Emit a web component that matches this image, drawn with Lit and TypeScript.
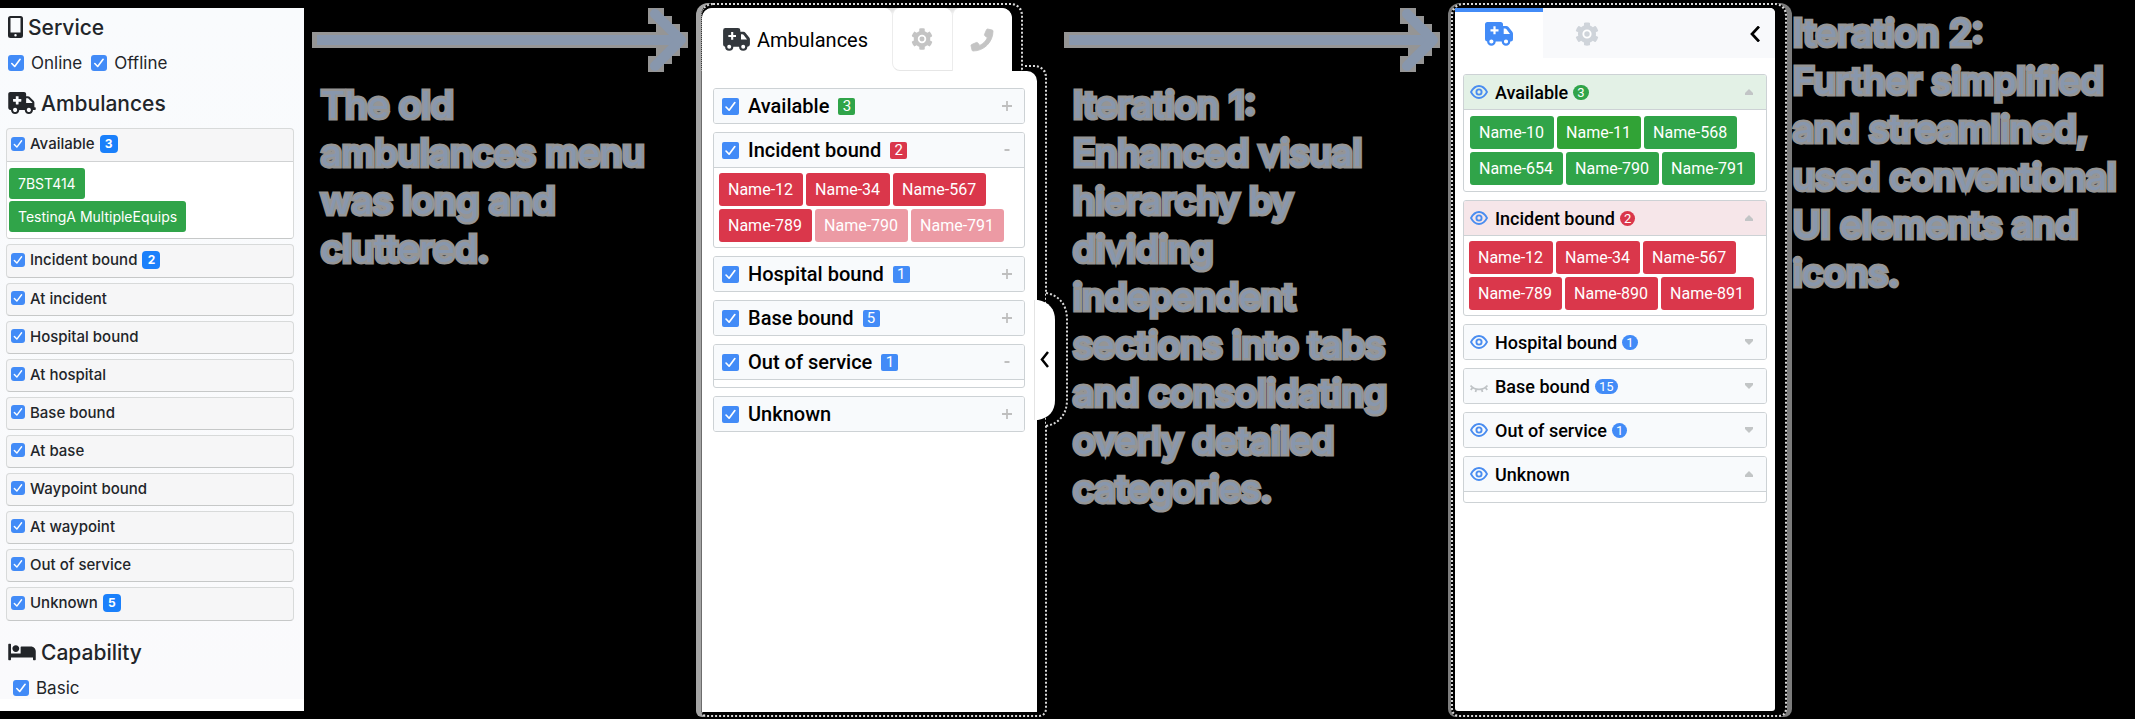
import { LitElement, html, svg, css, nothing } from "lit";
import { customElement, property } from "lit/decorators.js";

const ambulanceSolid = svg`<path d="M624 352h-16V243.9c0-12.7-5.1-24.9-14.1-33.9L494 110.1c-9-9-21.2-14.1-33.9-14.1H416V48c0-26.5-21.5-48-48-48H48C21.5 0 0 21.5 0 48v320c0 26.5 21.5 48 48 48h16c0 53 43 96 96 96s96-43 96-96h128c0 53 43 96 96 96s96-43 96-96h48c8.8 0 16-7.2 16-16v-32c0-8.8-7.2-16-16-16zM160 464c-26.5 0-48-21.5-48-48s21.5-48 48-48 48 21.5 48 48-21.5 48-48 48zm144-248c0 4.4-3.6 8-8 8h-56v56c0 4.4-3.6 8-8 8h-48c-4.4 0-8-3.6-8-8v-56h-56c-4.4 0-8-3.6-8-8v-48c0-4.4 3.6-8 8-8h56v-56c0-4.4 3.6-8 8-8h48c4.4 0 8 3.6 8 8v56h56c4.4 0 8 3.6 8 8v48zm176 248c-26.5 0-48-21.5-48-48s21.5-48 48-48 48 21.5 48 48-21.5 48-48 48zm80-208H416V144h44.1l99.9 99.9V256z"/>`;
const ambulanceRound = svg`<path fill-rule="evenodd" d="M2.5 0H15.500a2.500 2.500 0 0 1 2.500 2.500V4h3.200a3 3 0 0 1 2.300 1.100l3.800 4.700a3 3 0 0 1 .7 1.900V17a2.500 2.500 0 0 1-2.500 2.500h-.2a4.300 4.300 0 0 1-8.600 0h-6a4.300 4.300 0 0 1-8.600 0A2.200 2.200 0 0 1 0 17.300V2.500A2.500 2.500 0 0 1 2.500 0zM8.400 4.300v2.900H5.500v2.200h2.900v2.900h2.200V9.400h2.900V7.200h-2.900V4.300zM18.700 6.500V12H25l-3.700-4.900a1.500 1.500 0 0 0-1.200-.6zM6.400 17.400a2.100 2.100 0 1 0 0 4.200 2.100 2.100 0 0 0 0-4.200zM21 17.400a2.100 2.100 0 1 0 0 4.200 2.100 2.100 0 0 0 0-4.200z"/>`;
const gear = svg`<path d="M487.4 315.7l-42.6-24.6c4.3-23.2 4.3-47 0-70.2l42.6-24.6c4.9-2.8 7.1-8.6 5.5-14-11.1-35.6-30-67.8-54.7-94.6-3.8-4.1-10-5.1-14.8-2.3L380.8 110c-17.9-15.4-38.5-27.3-60.8-35.1V25.800c0-5.600-3.900-10.500-9.400-11.700-36.700-8.200-74.300-7.800-109.200 0-5.500 1.200-9.400 6.100-9.400 11.700V75c-22.200 7.900-42.800 19.800-60.800 35.100L88.700 85.500c-4.900-2.800-11-1.900-14.800 2.300-24.700 26.700-43.600 58.900-54.700 94.600-1.700 5.400.6 11.200 5.500 14L67.300 221c-4.300 23.200-4.300 47 0 70.200l-42.600 24.600c-4.900 2.800-7.100 8.600-5.500 14 11.100 35.600 30 67.800 54.700 94.600 3.800 4.100 10 5.100 14.800 2.300l42.600-24.600c17.900 15.400 38.500 27.300 60.800 35.100v49.200c0 5.600 3.900 10.500 9.400 11.700 36.700 8.200 74.300 7.800 109.200 0 5.500-1.200 9.400-6.100 9.400-11.700v-49.200c22.200-7.900 42.800-19.800 60.800-35.100l42.600 24.600c4.900 2.800 11 1.900 14.800-2.300 24.700-26.700 43.600-58.900 54.700-94.600 1.500-5.500-.7-11.300-5.600-14.100z"/><circle cx="256" cy="256" r="78" fill="none" stroke="#fff" stroke-width="40"/>`;
const phone = svg`<path d="M493.4 24.6l-104-24c-11.3-2.6-22.9 3.3-27.5 13.900l-48 112c-4.200 9.800-1.400 21.300 6.900 28l60.600 49.600c-36 76.700-98.900 140.500-177.200 177.200l-49.600-60.600c-6.800-8.300-18.200-11.100-28-6.900l-112 48C3.900 366.500-2 378.100.6 389.400l24 104C27.100 504.200 36.700 512 48 512c256.100 0 464-207.500 464-464 0-11.200-7.700-20.900-18.600-23.400z"/>`;
const bed = svg`<path d="M176 256c44.110 0 80-35.890 80-80s-35.890-80-80-80-80 35.890-80 80 35.890 80 80 80zm352-128H304c-8.840 0-16 7.160-16 16v144H64V80c0-8.840-7.160-16-16-16H16C7.160 64 0 71.160 0 80v352c0 8.840 7.160 16 16 16h32c8.840 0 16-7.160 16-16v-48h512v48c0 8.840 7.160 16 16 16h32c8.840 0 16-7.160 16-16V240c0-61.860-50.140-112-112-112z"/>`;

const eyeOpen = html`<svg class="eye" viewBox="0 0 18 14" aria-hidden="true"><g fill="none" stroke="#4a8df0"><path stroke-width="1.800" d="M1 7C3 3.200 5.700 1 9 1s6 2.200 8 6c-2 3.800-4.700 6-8 6S3 10.800 1 7z"/><circle cx="9" cy="7" r="2.600" stroke-width="1.900"/></g></svg>`;
const eyeClosed = html`<svg class="eye" viewBox="0 0 18 14" aria-hidden="true"><path fill="none" stroke="#bfc3c6" stroke-width="1.800" d="M.5 6.500C3 9.300 6 10.300 9 10.300s6-1 8.500-3.800M2.800 8.300.8 11M6.400 9.900l-.9 3M11.600 9.900l.9 3M15.200 8.300l2 2.700"/></svg>`;

const boxStyles = css`
  * { box-sizing: border-box; }
  button { font: inherit; border: 0; background: none; padding: 0; margin: 0; cursor: pointer; }
  h2, h3, p { margin: 0; }
  svg { display: block; flex: none; }
  label { display: flex; align-items: center; }
  input[type="checkbox"] {
    appearance: none;
    flex: none;
    margin: 0;
    width: 16px;
    height: 16px;
    border-radius: 3px;
    background: #428bf7 url("data:image/svg+xml,%3Csvg xmlns='http://www.w3.org/2000/svg' viewBox='0 0 16 16'%3E%3Cpath d='M3.800 8.500l2.900 3 5.400-7.200' fill='none' stroke='white' stroke-width='1.600' stroke-linecap='round' stroke-linejoin='round'/%3E%3C/svg%3E") center / 100% no-repeat;
  }
  input[type="checkbox"]:not(:checked) { background: #fff; border: 1px solid #bbb; }
`;

/* ---------- first menu ---------- */

@customElement("legacy-menu")
export class LegacyMenu extends LitElement {
  static styles = [boxStyles, css`
    :host { display: block; padding: 8px 0; font-family: Inter, sans-serif; color: #222529; }
    .panel { height: 100%; background: #fff; padding-bottom: 12px; }
    .content { height: 100%; overflow: hidden; background: linear-gradient(#f9fbfd, #fafafc); padding: 5px 10px 0 6px; }
    h2 { display: flex; align-items: center; gap: 5px; padding-left: 2px; height: 28px; font-size: 21px; font-weight: 500; }
    .checks { display: flex; gap: 9px; padding-left: 2px; height: 24px; margin: 10px 0 14px; font-size: 17px; }
    .checks label { gap: 7px; }
    .groups { display: flex; flex-direction: column; gap: 5px; margin: 11px 0 17px; }
    .group { border: 1px solid #d8dada; border-bottom-color: #c6c8c8; border-radius: 4px; background: #f6f6f7; overflow: hidden; }
    .group label { gap: 5px; height: 31px; padding: 0 0 3px 4px; font-size: 15px; font-weight: 500; }
    .group label.counted { height: 32px; }
    .group input { width: 14px; height: 14px; }
    .badge { display: grid; place-items: center; width: 18px; height: 18px; border-radius: 4px; background: #1a80fb; color: #fff; font-size: 12px; font-weight: 700; }
    .units { display: flex; flex-direction: column; align-items: flex-start; gap: 2px; padding: 6px 2px; border-top: 1px solid #d0d2d3; background: #fff; }
    .unit { height: 31px; padding: 0 9px; border-radius: 3px; background: #30a449; color: #fff; font-size: 14px; }
    .indent { padding-left: 7px; height: 20px; margin: 12px 0 0; }
  `];

  private groups: [string, string?, string[]?][] = [
    ["Available", "3", ["7BST414", "TestingA MultipleEquips"]],
    ["Incident bound", "2"], ["At incident"], ["Hospital bound"], ["At hospital"], ["Base bound"],
    ["At base"], ["Waypoint bound"], ["At waypoint"], ["Out of service"], ["Unknown", "5"],
  ];

  render() {
    return html`<div class="panel"><div class="content">
      <h2><svg width="15" height="22" viewBox="0 0 15 22" aria-hidden="true"><path fill="#222529" fill-rule="evenodd" d="M2.500 0h10A2.500 2.500 0 0 1 15 2.500v17a2.500 2.500 0 0 1-2.500 2.500h-10A2.500 2.500 0 0 1 0 19.500v-17A2.500 2.500 0 0 1 2.500 0zM2.500 2v14.500h10V2zM7.500 18a1.200 1.200 0 1 0 0 2.500 1.200 1.200 0 0 0 0-2.500z"/></svg>Service</h2>
      <div class="checks">
        <label><input type="checkbox" checked>Online</label>
        <label><input type="checkbox" checked>Offline</label>
      </div>
      <h2><svg width="28" height="22" viewBox="0 0 640 512" fill="#222529" aria-hidden="true">${ambulanceSolid}</svg>Ambulances</h2>
      <div class="groups">
        ${this.groups.map(([name, count, units]) => html`<section class="group">
          <label class=${count ? "counted" : ""}><input type="checkbox" checked>${name}${count ? html`<span class="badge">${count}</span>` : nothing}</label>
          ${units ? html`<div class="units">${units.map(u => html`<button class="unit">${u}</button>`)}</div>` : nothing}
        </section>`)}
      </div>
      <h2><svg width="28" height="22" viewBox="0 0 640 512" fill="#222529" aria-hidden="true">${bed}</svg>Capability</h2>
      <div class="checks indent"><label><input type="checkbox" checked>Basic</label></div>
    </div></div>`;
  }
}

/* ---------- captions ---------- */

@customElement("step-note")
export class StepNote extends LitElement {
  @property({ type: Array }) lines: string[] = [];
  @property({ type: Boolean }) arrow = false;

  static styles = css`
    :host { display: block; }
    .arrow { display: block; width: 100%; height: 81px; }
    p { margin: 0; padding-left: 9px; font: 500 37px/48px Inter, sans-serif; color: #8897ad; white-space: nowrap;
      -webkit-text-stroke: 5px #959595; paint-order: stroke fill; stroke-linejoin: miter; }
  `;

  render() {
    return html`
      ${this.arrow ? html`<svg class="arrow" aria-hidden="true">
        <rect x="0" y="32" width="100%" height="16" fill="#959595"/>
        <svg x="100%" overflow="visible">
          <path fill="#959595" d="M-40 8h16v8h8v8h8v8h8v16h-8v8h-8v8h-8v8h-16v-16h8v-8h8v-16h-8v-8h-8z"/>
        </svg>
        <rect x="5" y="35" width="97%" height="10" fill="#8897ad"/>
        <svg x="100%" overflow="visible">
          <path fill="none" stroke="#8897ad" stroke-width="10" stroke-linecap="round" stroke-linejoin="round" d="M-33 14-7 40-33 66"/>
        </svg>
      </svg>` : nothing}
      <p>${this.lines.map((l, i) => html`${i ? html`<br>` : nothing}${l}`)}</p>`;
  }
}

/* ---------- shared card list for the newer menus ---------- */

const cardStyles = css`
  .cards { display: flex; flex-direction: column; gap: 8px; }
  .card { border: 1px solid #cdd2d5; border-radius: 3px; background: #fff; overflow: hidden; }
  .head { display: flex; align-items: center; height: 34px; background: #f8fafc; font-weight: 500; color: #000; }
  .toggle { margin-left: auto; color: #bfbfbf; }
  .units { display: flex; flex-wrap: wrap; gap: 3px; border-top: 1px solid #cdd2d5; padding: 5px; min-height: 8px; }
  .units.empty { padding: 0; }
  .unit { height: 33px; padding: 0 10px 0 9px; border-radius: 3px; color: #fff; font-size: 16px; background: #da374b; }
  .unit.faded { background: #ec9aa4; }
  .unit.green { background: #30a449; }
  .unit.lime { background: #31a336; }
  .badge { color: #fff; font-weight: 400; background: #428bf7; text-align: center; }
  .badge.green { background: #30a449; }
  .badge.red { background: #da374b; }
`;

interface Card {
  name: string;
  count?: string;
  tone?: string;
  tint?: string;
  hidden?: boolean;
  units?: [string, string][];
}

@customElement("tabbed-menu")
export class TabbedMenu extends LitElement {
  static styles = [boxStyles, cardStyles, css`
    :host { display: flex; flex-direction: column; position: relative; padding: 3px 17px 2px 5px; font-family: Roboto, sans-serif; }
    .rim { border: 2px dotted #d8d8d8; background: #000; box-shadow: -5px 0 0 #a4a4a4; }
    .tabs-rim { position: relative; z-index: 1; width: 93%; border-bottom: 0; border-left-width: 1px; border-radius: 12px 12px 0 0; padding: 3px 9px 0 0; margin-bottom: -6px; }
    .body-rim { flex: 1; border-left-width: 1px; border-radius: 0 12px 8px 6px; padding: 4px 8px 3px 0; }
    .tabs { display: flex; height: 63px; background: linear-gradient(#ddd, #fff 10px); border-radius: 10px 10px 0 0; overflow: hidden; }
    .tab { display: grid; place-items: center; width: 60px; background: #fff; border-radius: 8px 8px 0 0; border-left: 1px solid #ececec; }
    .tab.wide { flex: 1; display: flex; align-items: center; justify-content: flex-start; gap: 7px; padding-left: 21px; font-size: 20px; color: #000; border: 0; }
    .tab.first { border-bottom: 1px solid #e6e6e6; border-radius: 8px 8px 0 8px; }
    .body { height: 100%; background: #fff; border-radius: 0 10px 0 0; padding: 17px 12px 0 11px; }
    .head { padding: 0 10px 0 8px; font-size: 20px; }
    label { gap: 9px; }
    .head input { width: 17px; height: 17px; border-radius: 2px; }
    .badge { width: 17px; height: 17px; border-radius: 2px; font-size: 15px; line-height: 17px; }
    .toggle { width: 14px; height: 20px; display: grid; place-items: center; }
    .handle { position: absolute; z-index: 2; top: 292px; right: -4px; width: 34px; height: 135px; }
    .handle svg { width: 34px; height: 135px; }
  `];

  private cards: Card[] = [
    { name: "Available", count: "3", tone: "green" },
    { name: "Incident bound", count: "2", tone: "red", units: [["Name-12", ""], ["Name-34", ""], ["Name-567", ""], ["Name-789", ""], ["Name-790", "faded"], ["Name-791", "faded"]] },
    { name: "Hospital bound", count: "1" },
    { name: "Base bound", count: "5" },
    { name: "Out of service", count: "1", units: [] },
    { name: "Unknown" },
  ];

  render() {
    return html`
      <div class="rim tabs-rim"><div class="tabs">
        <button class="tab wide"><svg width="27" height="23" viewBox="0 0 28 24" fill="#33383d" aria-hidden="true">${ambulanceRound}</svg>Ambulances</button>
        <button class="tab first" aria-label="Settings"><svg width="22" height="22" viewBox="0 0 512 512" fill="#c4c4c4" aria-hidden="true">${gear}</svg></button>
        <button class="tab" aria-label="Calls"><svg width="22" height="22" viewBox="0 0 512 512" fill="#c4c4c4" stroke="#c4c4c4" stroke-width="20" stroke-linejoin="round" overflow="visible" aria-hidden="true">${phone}</svg></button>
      </div></div>
      <div class="rim body-rim"><div class="body"><div class="cards">
        ${this.cards.map(c => html`<section class="card">
          <div class="head">
            <label><input type="checkbox" checked>${c.name}${c.count ? html`<span class="badge ${c.tone ?? ""}">${c.count}</span>` : nothing}</label>
            <button class="toggle" aria-label=${c.units ? "Collapse" : "Expand"}><svg width="10" height="10" viewBox="0 0 10 10" stroke="currentColor" stroke-width="1.800"><path d=${c.units ? "M2.500 5h5" : "M0 5h10M5 0v10"}/></svg></button>
          </div>
          ${c.units ? html`<div class="units ${c.units.length ? "" : "empty"}">${c.units.map(([n, t]) => html`<button class="unit ${t}">${n}</button>`)}</div>` : nothing}
        </section>`)}
      </div></div></div>
      <button class="handle" aria-label="Collapse menu"><svg viewBox="0 0 34 135" aria-hidden="true">
        <path fill="#000" stroke="#d8d8d8" stroke-width="2" stroke-dasharray="2 2" d="M12 1C25 3 33 13 33 27v81c0 14-8 24-21 26"/>
        <path fill="#fff" d="M1 8h3c11 2 17 9 17 20v80c0 11-6 18-17 20H1z"/>
        <path fill="none" stroke="#e4e4e4" d="M.5 8v120"/>
        <path fill="none" stroke="#000" stroke-width="2.500" d="M14 60 8 67.500 14 75"/>
      </svg></button>`;
  }
}

@customElement("compact-menu")
export class CompactMenu extends LitElement {
  static styles = [boxStyles, cardStyles, css`
    :host { display: block; padding: 3px 5px 2px 3px; font-family: Roboto, sans-serif; }
    .rim { height: 100%; border: 2px dotted #d8d8d8; border-radius: 12px 12px 8px 8px; background: #000; box-shadow: -3px 0 0 #7c7c7c, 5px 0 0 #7c7c7c; padding: 3px 10px 4px 2px; }
    .body { height: 100%; background: #fff; border-radius: 0 5px 3px 3px; overflow: hidden; }
    .tabs { display: flex; align-items: stretch; height: 50px; background: #f8f9fb; }
    .tab { display: grid; place-items: center; width: 88px; padding-top: 2px; }
    .tab.active { background: #fff; border-top: 4px solid #428bf7; padding: 0 0 2px; }
    .close { margin-left: auto; padding: 2px 15px 0 0; }
    .cards { padding: 16px 8px 0; }
    .card:first-child .units { padding: 6px; }
    .card:last-child .units { min-height: 11px; }
    .head { padding: 0 12px 0 6px; font-size: 18px; }
    .head h3 { font: inherit; margin-left: 7px; }
    .head.mint { background: #e3f1e6; }
    .head.rose { background: #f6e6e9; }
    .eye { width: 18px; height: 14px; }
    .badge { margin-left: 5px; min-width: 15px; height: 15px; padding: 0 4px; border-radius: 8px; font-size: 13px; line-height: 15px; }
    .toggle { width: 10px; height: 20px; display: grid; place-items: center; }
  `];

  private cards: Card[] = [
    { name: "Available", count: "3", tone: "green", tint: "mint", units: [["Name-10", "green"], ["Name-11", "lime"], ["Name-568", "green"], ["Name-654", "green"], ["Name-790", "green"], ["Name-791", "green"]] },
    { name: "Incident bound", count: "2", tone: "red", tint: "rose", units: [["Name-12", ""], ["Name-34", ""], ["Name-567", ""], ["Name-789", ""], ["Name-890", ""], ["Name-891", ""]] },
    { name: "Hospital bound", count: "1" },
    { name: "Base bound", count: "15", hidden: true },
    { name: "Out of service", count: "1" },
    { name: "Unknown", units: [] },
  ];

  render() {
    return html`<div class="rim"><div class="body">
      <div class="tabs">
        <button class="tab active" aria-label="Ambulances"><svg width="28" height="24" viewBox="0 0 28 24" fill="#428bf7" aria-hidden="true">${ambulanceRound}</svg></button>
        <button class="tab" aria-label="Settings"><svg width="24" height="24" viewBox="0 0 512 512" fill="#cfd4da" aria-hidden="true">${gear}</svg></button>
        <button class="close" aria-label="Collapse menu"><svg width="10" height="16" viewBox="0 0 10 16" fill="none" stroke="#000" stroke-width="2.700" aria-hidden="true"><path d="M9 .5 2 8l7 7.500"/></svg></button>
      </div>
      <div class="cards">
        ${this.cards.map(c => html`<section class="card">
          <div class="head ${c.tint ?? ""}">
            <button aria-label="Show or hide ${c.name}">${c.hidden ? eyeClosed : eyeOpen}</button>
            <h3>${c.name}</h3>${c.count ? html`<span class="badge ${c.tone ?? ""}">${c.count}</span>` : nothing}
            <button class="toggle" aria-label=${c.units ? "Collapse" : "Expand"}><svg width="8" height="6" viewBox="0 0 8 6" fill="#c2c5c6"><path d=${c.units ? "M4 0l4 4v2H0V4z" : "M4 6l4-4V0H0v2z"}/></svg></button>
          </div>
          ${c.units ? html`<div class="units ${c.units.length ? "" : "empty"}">${c.units.map(([n, t]) => html`<button class="unit ${t}">${n}</button>`)}</div>` : nothing}
        </section>`)}
      </div>
    </div></div>`;
  }
}

@customElement("app-root")
export class AppRoot extends LitElement {
  static styles = css`
    :host { display: grid; grid-template-columns: 304fr 392fr 368fr 384fr 344fr 343fr; height: 100vh; background: #000; overflow: hidden; }
    :host > * { min-width: 0; min-height: 0; }
    .tabbed { z-index: 1; }
    .first { padding: 0 8px; }
    .second { padding: 0 8px 0 0; }
    .third { padding-top: 9px; margin-left: -8px; }
  `;

  render() {
    return html`
      <legacy-menu></legacy-menu>
      <step-note class="first" arrow .lines=${["The old", "ambulances menu", "was long and", "cluttered."]}></step-note>
      <tabbed-menu class="tabbed"></tabbed-menu>
      <step-note class="second" arrow .lines=${["Iteration 1:", "Enhanced visual", "hierarchy by", "dividing", "independent", "sections into tabs", "and consolidating", "overly detailed", "categories."]}></step-note>
      <compact-menu></compact-menu>
      <step-note class="third" .lines=${["Iteration 2:", "Further simplified", "and streamlined,", "used conventional", "UI elements and", "icons."]}></step-note>`;
  }
}
